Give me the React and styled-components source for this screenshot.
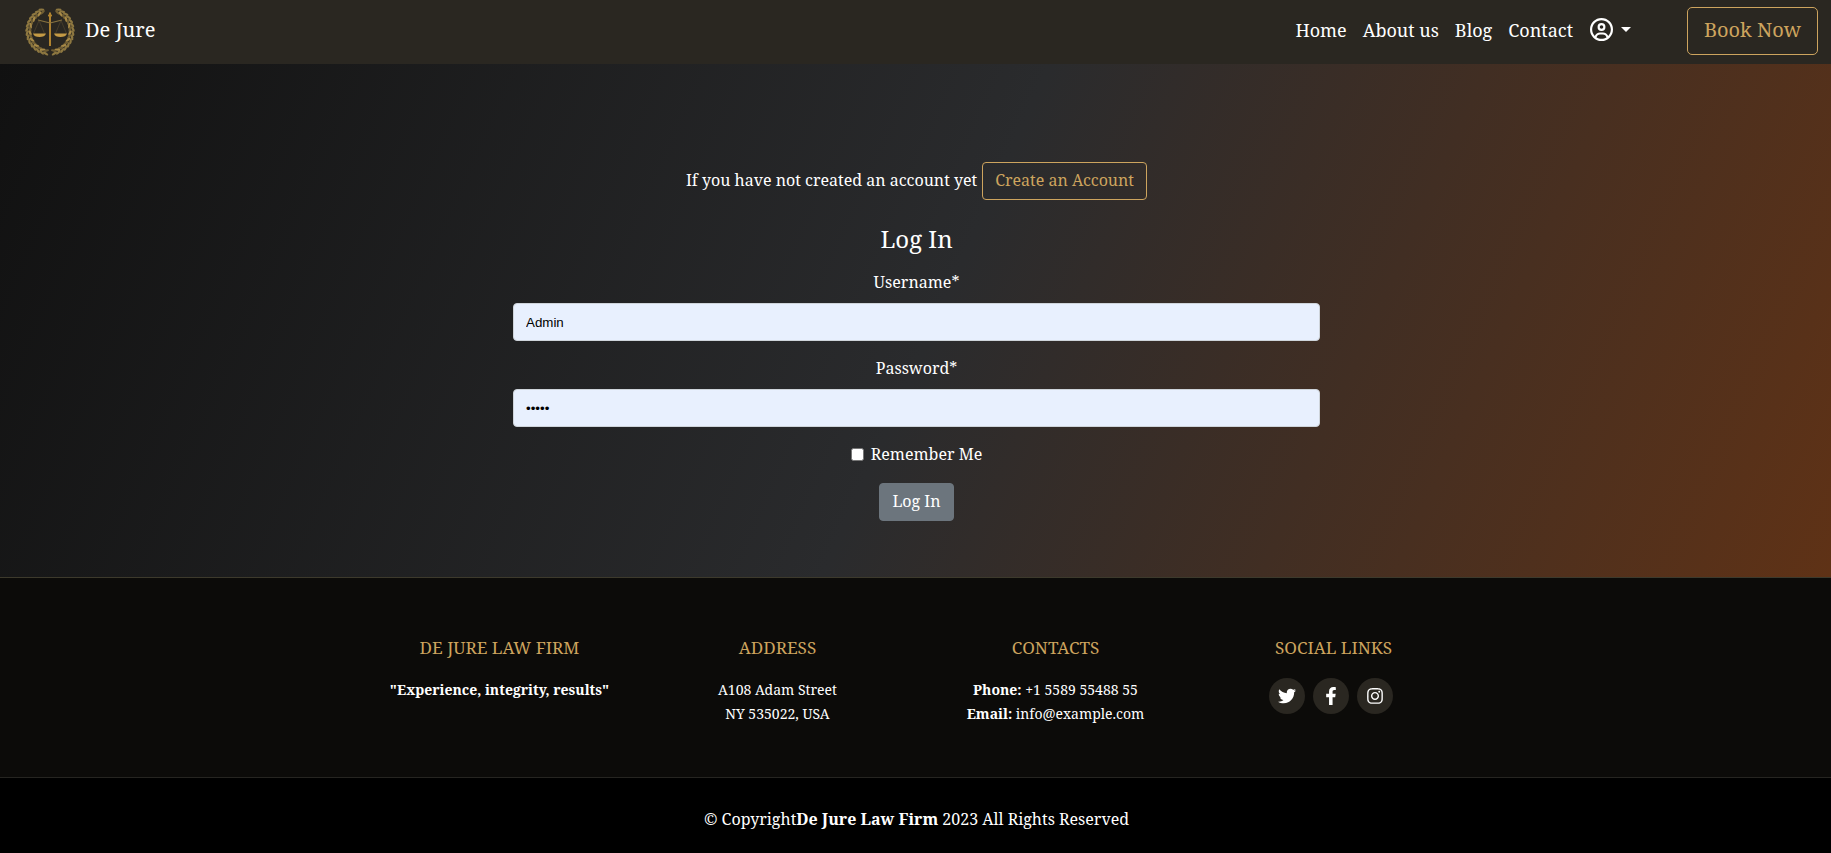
import React from 'react'
import styled, { createGlobalStyle } from 'styled-components'
import { FaRegCircleUser } from 'react-icons/fa6'
import { FaTwitter, FaFacebookF, FaInstagram } from 'react-icons/fa'

const serif = `'Noto Serif', 'DejaVu Serif', 'Liberation Serif', serif`
const gold = '#cda45e'

const GlobalStyle = createGlobalStyle`
  * { box-sizing: border-box; }
  html, body { margin: 0; padding: 0; background: #fff; }
  body { font-family: ${serif}; color: #fff; }
`

const Navbar = styled.header`
  height: 64px;
  background: #2a2721;
  display: flex;
  align-items: center;
  padding: 0 13px 2px 25px;
`
const Brand = styled.a`
  display: flex;
  align-items: center;
  gap: 10px;
  font-size: 20px;
  line-height: 26px;
  color: #fff;
`
const BrandName = styled.span`
  margin-top: -2px;
`
const NavLinks = styled.nav`
  margin-left: auto;
  margin-bottom: 2px;
  display: flex;
  align-items: center;
  gap: 16px;
  font-size: 18px;
  line-height: 24px;
`
const UserMenu = styled.span`
  display: flex;
  align-items: center;
  gap: 8px;
  margin: 0 56px 2px 1px;
  font-size: 23px;
`
const Caret = styled.span`
  width: 0;
  height: 0;
  border-top: 5px solid #fff;
  border-left: 5px solid transparent;
  border-right: 5px solid transparent;
`
const BookButton = styled.a`
  width: 131px;
  height: 48px;
  padding-bottom: 4px;
  display: flex;
  align-items: center;
  justify-content: center;
  border: 1px solid ${gold};
  border-radius: 5px;
  color: ${gold};
  font-size: 20px;
`
const Main = styled.main`
  height: 514px;
  background: linear-gradient(114deg, #111111 0%, #2a2b2d 51%, #5f3216 100%);
  border-bottom: 1px solid #3d3a2c;
  display: flex;
  flex-direction: column;
  align-items: center;
  padding: 98px 0 0 2px;
`
const SignupRow = styled.div`
  display: flex;
  align-items: center;
  gap: 5px;
  font-size: 16px;
  line-height: 24px;
`
const SignupText = styled.span`
  margin-top: -2px;
`
const OutlineButton = styled.a`
  height: 38px;
  padding: 0 12px 2px;
  display: flex;
  align-items: center;
  border: 1px solid ${gold};
  border-radius: 4px;
  color: ${gold};
`
const Title = styled.h1`
  margin: 21px 0 0;
  font-size: 24px;
  font-weight: 400;
  line-height: 36px;
`
const LoginForm = styled.form`
  width: 807px;
  margin-top: 6px;
  display: flex;
  flex-direction: column;
  align-items: center;
`
const FieldLabel = styled.label`
  font-size: 16px;
  line-height: 24px;
  margin: 7px 0 9px;
`
const TextField = styled.input`
  width: 100%;
  height: 38px;
  padding: 0 12px;
  margin-bottom: 8px;
  border: 1px solid #ced4da;
  border-radius: 4px;
  background: #e8f0fe;
  color: #000;
  font-family: 'Liberation Sans', Arial, sans-serif;
  font-size: 13.33px;
  outline: none;
`
const RememberRow = styled.label`
  display: flex;
  align-items: center;
  gap: 7px;
  font-size: 16px;
  line-height: 24px;
  margin: 7px 0 17px;
`
const CheckBox = styled.input`
  appearance: none;
  width: 13px;
  height: 13px;
  margin: 0;
  background: #fff;
  border: 1px solid #767676;
  border-radius: 2.5px;
`
const SubmitButton = styled.button`
  height: 38px;
  width: 75px;
  padding: 0 0 2px;
  border: 1px solid #6c757d;
  border-radius: 4px;
  background: #6c757d;
  color: #fff;
  font-family: ${serif};
  font-size: 16px;
`
const FooterTop = styled.section`
  height: 200px;
  background: #0c0b09;
  border-bottom: 1px solid #262521;
  display: grid;
  grid-template-columns: repeat(4, 278px);
  justify-content: center;
  padding: 58px 0 0 2px;
  text-align: center;
`
const FooterColumn = styled.div`
  font-size: 14px;
  line-height: 24px;
`
const FooterHeading = styled.h4`
  margin: 0 0 18px;
  font-size: 17.12px;
  font-weight: 400;
  line-height: 24px;
  color: ${gold};
`
const FooterLine = styled.p`
  margin: 0;
`
const SocialRow = styled.div`
  display: flex;
  justify-content: center;
  margin: 3px 0 0 2px;
`
const SocialLink = styled.a`
  width: 36px;
  height: 36px;
  margin-right: 8px;
  border-radius: 50%;
  background: #2a2721;
  display: flex;
  align-items: center;
  justify-content: center;
  font-size: 18px;
  color: #fff;
`
const FooterBottom = styled.div`
  height: 75px;
  padding: 29px 0 0 2px;
  background: #000;
  display: flex;
  justify-content: center;
  font-size: 16px;
  line-height: 24px;
  white-space: pre;
`

// wreath leaves run down each side from the top opening to the bottom join
function wreathLeaves() {
  const leaves = []
  for (let i = 0; i < 15; i++) {
    const deg = 112 + i * 10.5
    const a = deg * Math.PI / 180
    leaves.push({ deg, x: 25 + 23 * Math.cos(a), y: 25 - 23 * Math.sin(a), tilt: 22, tone: '#8d7740' })
    leaves.push({ deg, x: 25 + 20 * Math.cos(a), y: 25 - 20 * Math.sin(a), tilt: -22, tone: i % 2 ? '#a88a47' : '#6f5d33' })
  }
  return leaves
}

function Logo() {
  const leaves = wreathLeaves()
  return (
    <svg width="50" height="50" viewBox="0 0 50 50" fill="none">
      {leaves.map((l, i) => (
        <g key={i}>
          <ellipse cx={l.x} cy={l.y} rx="1.2" ry="3" fill={l.tone} transform={`rotate(${-l.deg + l.tilt} ${l.x} ${l.y})`} />
          <ellipse cx={50 - l.x} cy={l.y} rx="1.2" ry="3" fill={l.tone} transform={`rotate(${l.deg - l.tilt} ${50 - l.x} ${l.y})`} />
        </g>
      ))}
      <path d="M25 6.5v33.5" stroke="#b0832f" strokeWidth="2" />
      <path d="M23 9.5h4" stroke="#b0832f" strokeWidth="1.8" />
      <path d="M13 14l12 3 12-3" stroke="#8a7440" strokeWidth="1.1" />
      <path d="M14 14.5l-5.5 13M14 14.5l5.5 13M36 14.5l-5.5 13M36 14.5l5.5 13" stroke="#5f5034" strokeWidth=".5" />
      <path d="M8 27.5h13c-1 2.600-3 3.500-6.500 3.500s-5.500-.9-6.500-3.500zM29 27.500h13c-1 2.600-3 3.500-6.500 3.500s-5.500-.9-6.500-3.500z" fill="#c49a45" />
    </svg>
  )
}

export default function App() {
  return (
    <>
      <GlobalStyle />
      <Navbar>
        <Brand>
          <Logo />
          <BrandName>De Jure</BrandName>
        </Brand>
        <NavLinks>
          <a>Home</a>
          <a>About us</a>
          <a>Blog</a>
          <a>Contact</a>
          <UserMenu>
            <FaRegCircleUser />
            <Caret />
          </UserMenu>
        </NavLinks>
        <BookButton>Book Now</BookButton>
      </Navbar>
      <Main>
        <SignupRow>
          <SignupText>If you have not created an account yet</SignupText>
          <OutlineButton>Create an Account</OutlineButton>
        </SignupRow>
        <Title>Log In</Title>
        <LoginForm>
          <FieldLabel>Username*</FieldLabel>
          <TextField defaultValue="Admin" />
          <FieldLabel>Password*</FieldLabel>
          <TextField type="password" defaultValue="admin" />
          <RememberRow>
            <CheckBox type="checkbox" />
            Remember Me
          </RememberRow>
          <SubmitButton type="button">Log In</SubmitButton>
        </LoginForm>
      </Main>
      <footer>
        <FooterTop>
          <FooterColumn>
            <FooterHeading>DE JURE LAW FIRM</FooterHeading>
            <FooterLine><strong>"Experience, integrity, results"</strong></FooterLine>
          </FooterColumn>
          <FooterColumn>
            <FooterHeading>ADDRESS</FooterHeading>
            <FooterLine>A108 Adam Street</FooterLine>
            <FooterLine>NY 535022, USA</FooterLine>
          </FooterColumn>
          <FooterColumn>
            <FooterHeading>CONTACTS</FooterHeading>
            <FooterLine><strong>Phone:</strong> +1 5589 55488 55</FooterLine>
            <FooterLine><strong>Email:</strong> info@example.com</FooterLine>
          </FooterColumn>
          <FooterColumn>
            <FooterHeading>SOCIAL LINKS</FooterHeading>
            <SocialRow>
              <SocialLink><FaTwitter /></SocialLink>
              <SocialLink><FaFacebookF /></SocialLink>
              <SocialLink><FaInstagram /></SocialLink>
            </SocialRow>
          </FooterColumn>
        </FooterTop>
        <FooterBottom>
          © Copyright<strong>De Jure Law Firm</strong> 2023 All Rights Reserved
        </FooterBottom>
      </footer>
    </>
  )
}
